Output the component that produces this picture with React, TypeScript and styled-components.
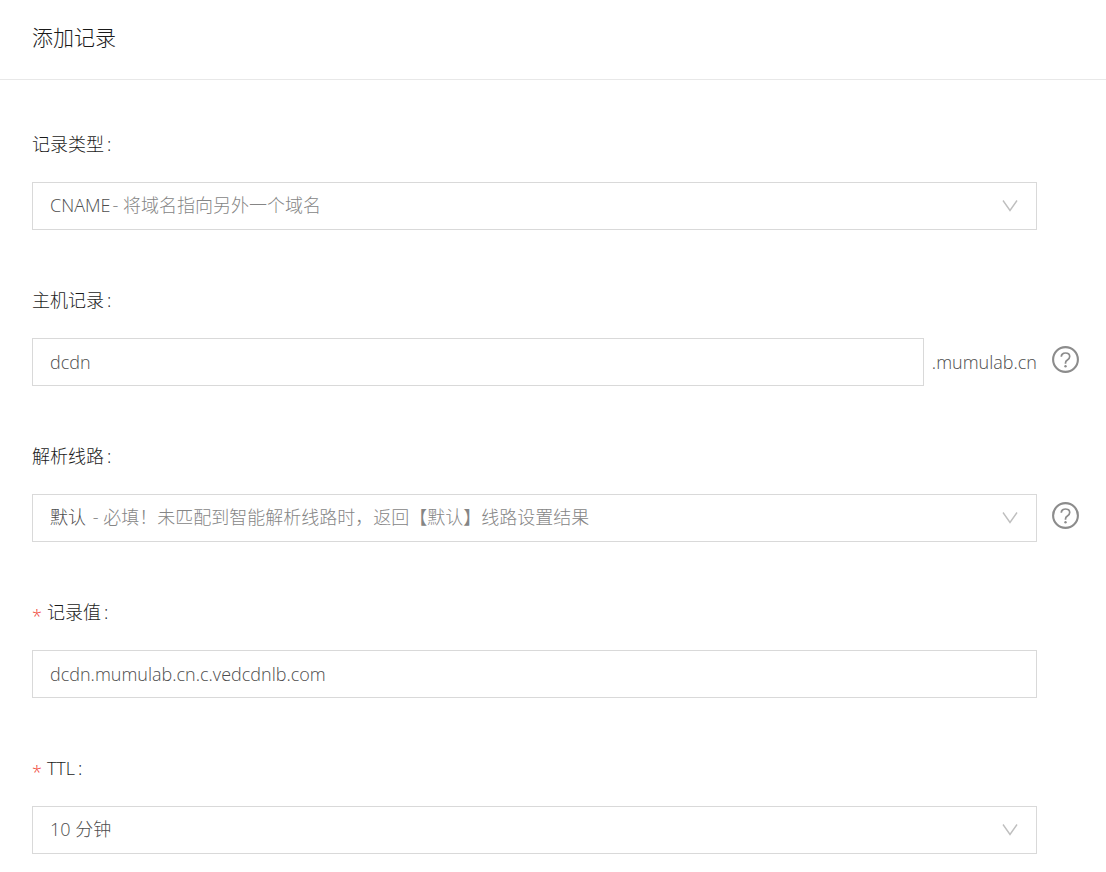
import React, { useState } from "react";
import styled, { createGlobalStyle } from "styled-components";

const GlobalStyle = createGlobalStyle`
  *, *::before, *::after { box-sizing: border-box; }
  body {
    margin: 0;
    background: #fff;
    color: #1a1a1a;
    font-family: "Open Sans", "Noto Sans CJK SC", sans-serif;
    font-size: 18px;
    font-weight: 300;
    line-height: 28px;
  }
`;

const Header = styled.header`
  padding: 22px 32px 26px;
  border-bottom: 1px solid #e8e8e8;
`;

const Title = styled.h1`
  margin: 0;
  font-size: 21px;
  font-weight: 300;
  line-height: 31px;
`;

const Form = styled.form`
  display: flex;
  flex-direction: column;
  gap: 56px;
  padding: 50px 27px 18px 32px;
`;

const Field = styled.div`
  display: flex;
  flex-direction: column;
  gap: 24px;
`;

const Label = styled.label<{ $required?: boolean }>`
  display: flex;
  height: 28px;
  &::before {
    content: ${(p) => (p.$required ? '"*"' : "none")};
    padding-top: 4px;
    margin-right: 5px;
    color: #f04134;
  }
  &::after {
    content: ":";
    margin-left: 3px;
  }
`;

const Row = styled.div`
  display: grid;
  grid-template-columns: minmax(0, 1fr) 27px;
  column-gap: 15px;
  align-items: center;
`;

const Control = styled.div`
  display: flex;
  align-items: center;
  gap: 8px;
  color: #4d4d4d;
`;

const TextInput = styled.input`
  flex: 1;
  min-width: 0;
  height: 48px;
  padding: 0 17px;
  border: 1px solid #d9d9d9;
  border-radius: 0;
  outline: none;
  background: #fff;
  color: #4d4d4d;
  font: inherit;
  &:focus { border-color: #8c8c8c; }
`;

const SelectBox = styled.div`
  display: flex;
  align-items: center;
  height: 48px;
  padding: 0 18px 0 17px;
  border: 1px solid #d9d9d9;
  color: #bfbfbf;
  &:focus-within { border-color: #8c8c8c; }
`;

const Select = styled.select<{ $fill?: boolean }>`
  flex: ${(p) => (p.$fill ? "1" : "none")};
  field-sizing: content;
  appearance: none;
  height: 46px;
  margin: 0;
  padding: 0 0 2px;
  border: 0;
  outline: none;
  background: transparent;
  color: #4d4d4d;
  font: inherit;
  cursor: pointer;
`;

const Hint = styled.label`
  flex: 1;
  min-width: 0;
  padding: 0 0 2px 2px;
  overflow: hidden;
  color: #858585;
  white-space: pre;
  cursor: pointer;
`;

const HelpButton = styled.button`
  display: flex;
  padding: 0 0 6px;
  border: 0;
  background: none;
  color: #8c8c8c;
  cursor: pointer;
`;

const Chevron = () => (
  <svg width="16" height="14" viewBox="0 0 16 14" fill="none" stroke="currentColor" strokeWidth="1.4" aria-hidden="true">
    <path d="M1 1.5 8 11.5 15 1.5" />
  </svg>
);

const Help = ({ topic }: { topic: string }) => (
  <HelpButton type="button" aria-label={topic}>
    <svg width="27" height="27" viewBox="0 0 27 27" fill="none" stroke="currentColor" aria-hidden="true">
      <circle cx="13.5" cy="13.5" r="12.4" strokeWidth="2.1" />
      <path d="M9.3 10.8c0-2.3 1.7-3.8 4.2-3.8s4.2 1.5 4.2 3.6c0 1.7-1 2.6-2.3 3.4-1.3.8-1.9 1.5-1.9 2.9v.8" strokeWidth="1.7" />
      <circle cx="13.5" cy="20.3" r="1.2" fill="currentColor" stroke="none" />
    </svg>
  </HelpButton>
);

export default function App() {
  const [host, setHost] = useState("dcdn");
  const [value, setValue] = useState("dcdn.mumulab.cn.c.vedcdnlb.com");

  return (
    <main>
      <GlobalStyle />
      <Header>
        <Title>添加记录</Title>
      </Header>
      <Form>
        <Field>
          <Label htmlFor="type">记录类型</Label>
          <Row>
            <SelectBox>
              <Select id="type">
                <option>CNAME</option>
              </Select>
              <Hint htmlFor="type">- 将域名指向另外一个域名</Hint>
              <Chevron />
            </SelectBox>
          </Row>
        </Field>

        <Field>
          <Label htmlFor="host">主机记录</Label>
          <Row>
            <Control>
              <TextInput id="host" value={host} onChange={(e) => setHost(e.target.value)} />
              <span>.mumulab.cn</span>
            </Control>
            <Help topic="主机记录" />
          </Row>
        </Field>

        <Field>
          <Label htmlFor="line">解析线路</Label>
          <Row>
            <SelectBox>
              <Select id="line">
                <option>默认</option>
              </Select>
              <Hint htmlFor="line"> - 必填！未匹配到智能解析线路时，返回【默认】线路设置结果</Hint>
              <Chevron />
            </SelectBox>
            <Help topic="解析线路" />
          </Row>
        </Field>

        <Field>
          <Label htmlFor="value" $required>记录值</Label>
          <Row>
            <TextInput id="value" required value={value} onChange={(e) => setValue(e.target.value)} />
          </Row>
        </Field>

        <Field>
          <Label htmlFor="ttl" $required>TTL</Label>
          <Row>
            <SelectBox>
              <Select id="ttl" $fill required>
                <option>10 分钟</option>
              </Select>
              <Chevron />
            </SelectBox>
          </Row>
        </Field>
      </Form>
    </main>
  );
}
